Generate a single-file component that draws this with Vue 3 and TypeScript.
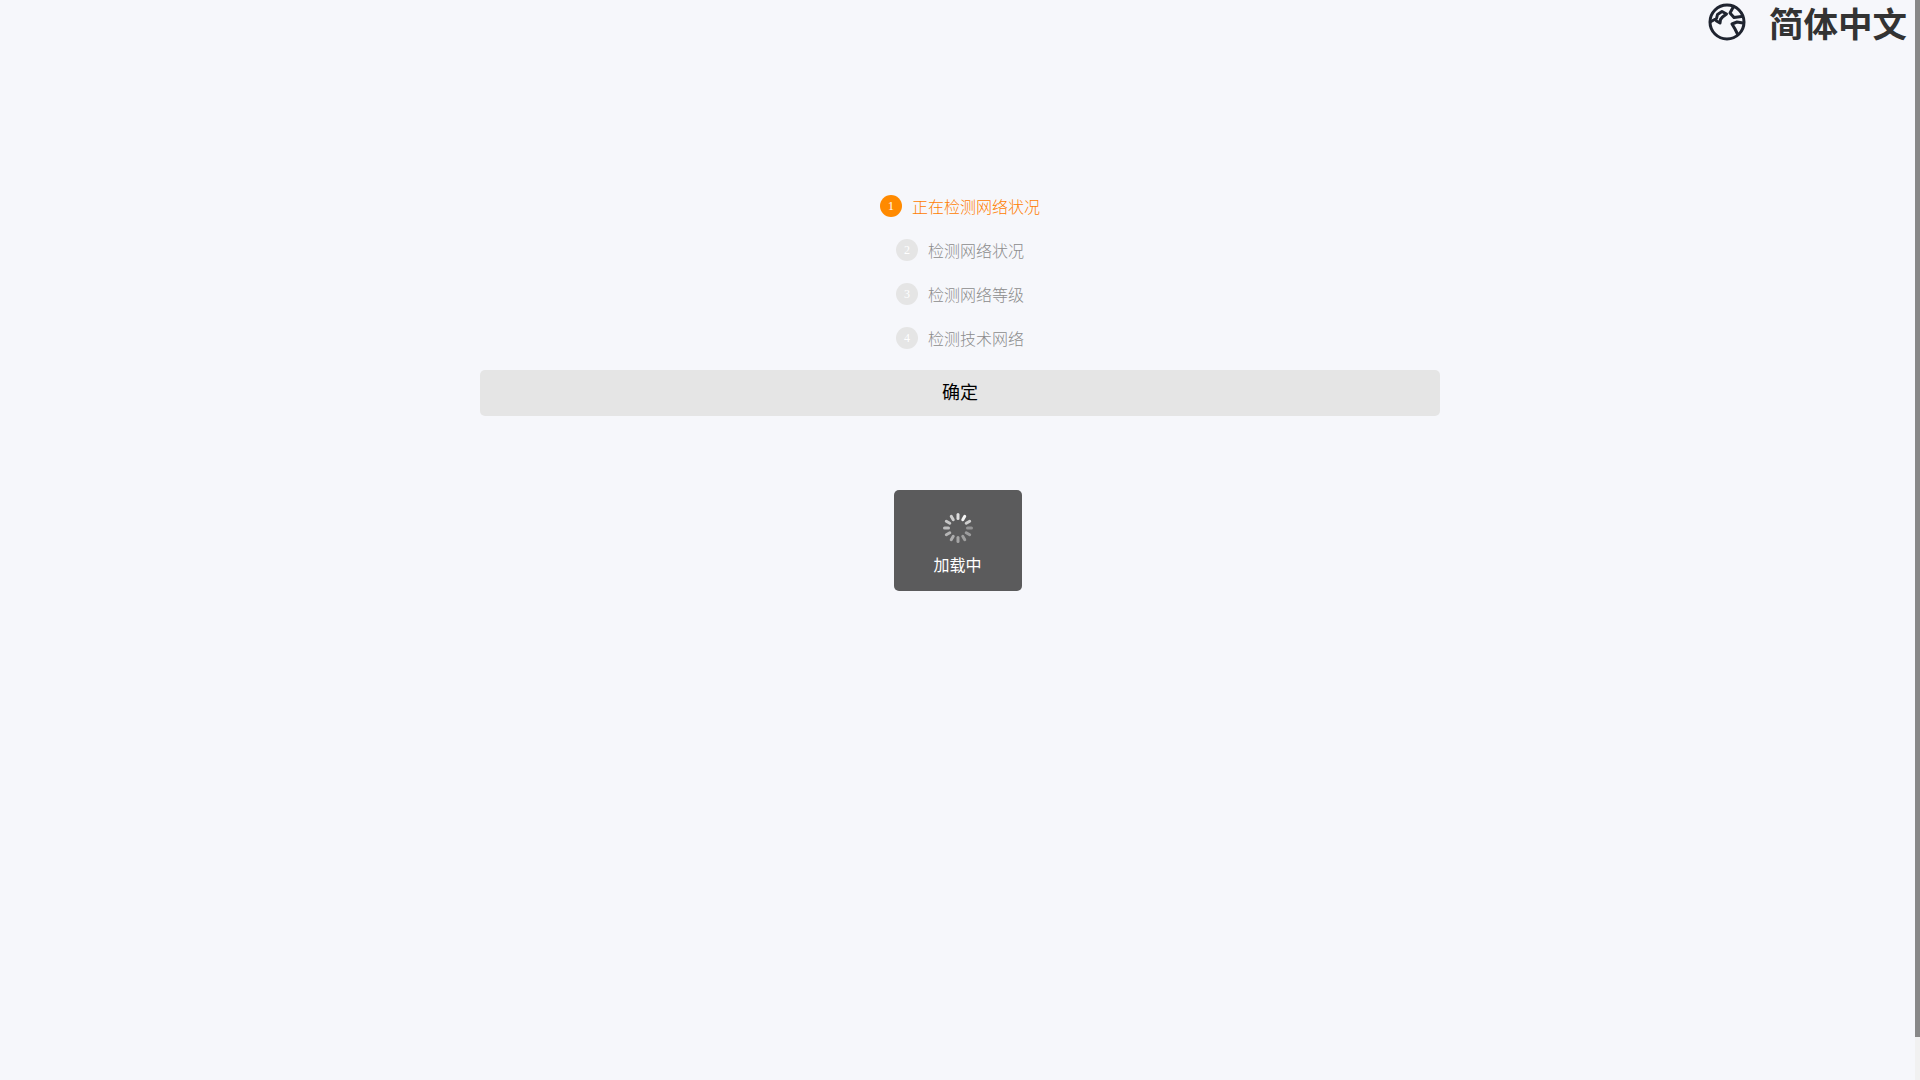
<script setup lang="ts">
const steps = [
  { n: 1, label: '正在检测网络状况', active: true },
  { n: 2, label: '检测网络状况', active: false },
  { n: 3, label: '检测网络等级', active: false },
  { n: 4, label: '检测技术网络', active: false },
]
const spokes = [0.95, 0.7, 0.35, 0.4, 0.42, 0.45, 0.5, 0.55, 0.6, 0.65, 0.7, 0.8].map((o, i) => ({
  o,
  a: 30 + i * 30,
}))
</script>

<template>
  <div class="page">
    <header class="top">
      <svg class="globe" viewBox="0 0 40 40" fill="none" stroke="#1f2430" stroke-width="3" stroke-linecap="round" stroke-linejoin="round">
        <circle cx="20" cy="20" r="17" />
        <path d="M4 19.5 L9.5 16.5 L10.5 12.5 L15 9.5 L19.5 12 L15.5 15 L13.5 17.5 L13 21 L9.5 19" />
        <path d="M26 5.5 L23 11 L27 15.5 L34.5 14.5" />
        <path d="M36 21 L30 20 L25 22 L28 27 L30.5 32" />
      </svg>
      <span class="lang">简体中文</span>
    </header>

    <main class="body">
      <ul class="steps">
        <li v-for="s in steps" :key="s.n" class="step" :class="{ active: s.active }">
          <span class="num">{{ s.n }}</span>
          <span class="label">{{ s.label }}</span>
        </li>
      </ul>
      <button class="confirm" type="button">确定</button>
    </main>

    <div class="toast">
      <svg class="spinner" viewBox="0 0 32 32" stroke="#fff" stroke-width="3" stroke-linecap="round">
        <line
          v-for="s in spokes"
          :key="s.a"
          x1="16"
          y1="2.5"
          x2="16"
          y2="6.5"
          :opacity="s.o"
          :transform="`rotate(${s.a} 16 16)`"
        />
      </svg>
      <span class="toast-text">加载中</span>
    </div>

    <div class="scrollbar"><div class="thumb"></div></div>
  </div>
</template>

<style scoped>
.page {
  min-height: 1125px;
  background: #f6f7fb;
  font-family: "Noto Sans CJK SC", "Noto Sans", sans-serif;
}
.top {
  height: 184px;
  display: flex;
  justify-content: flex-end;
  align-items: flex-start;
  padding-right: 13px;
  box-sizing: border-box;
}
.globe {
  width: 40px;
  height: 40px;
  margin-top: 2px;
  margin-right: 22px;
}
.lang {
  font-size: 34.5px;
  font-weight: 700;
  line-height: 44px;
  color: #333;
}
.body {
  display: flex;
  flex-direction: column;
  align-items: center;
}
.steps {
  list-style: none;
  margin: 0;
  padding: 0;
}
.step {
  height: 44px;
  display: flex;
  align-items: center;
  justify-content: center;
  gap: 10px;
  color: #8c8c8c;
  font-size: 16px;
  font-weight: 300;
}
.num {
  width: 22px;
  height: 22px;
  border-radius: 50%;
  background: #e5e5e5;
  color: #fff;
  font-family: "Liberation Serif", serif;
  font-size: 12px;
  font-weight: 400;
  display: flex;
  align-items: center;
  justify-content: center;
}
.active {
  color: #ff7d00;
}
.active .num {
  background: #ff8a00;
}
.confirm {
  display: block;
  width: 960px;
  height: 46px;
  margin-top: 10px;
  border: 0;
  border-radius: 5px;
  background: #e5e5e5;
  color: #000;
  font-family: inherit;
  font-size: 18px;
  padding: 0 0 4px;
}
.toast {
  position: fixed;
  left: 893.5px;
  top: 490px;
  width: 128px;
  height: 101px;
  border-radius: 5px;
  background: #5b5b5c;
  display: flex;
  flex-direction: column;
  align-items: center;
  box-sizing: border-box;
  padding-top: 22px;
}
.spinner {
  width: 32px;
  height: 32px;
}
.toast-text {
  margin-top: 8px;
  font-size: 16px;
  line-height: 24px;
  color: #fff;
}
.scrollbar {
  position: fixed;
  top: 0;
  right: 0;
  bottom: 0;
  width: 5px;
  background: #f1f1f1;
}
.thumb {
  height: 1037px;
  background: #888;
}
</style>
